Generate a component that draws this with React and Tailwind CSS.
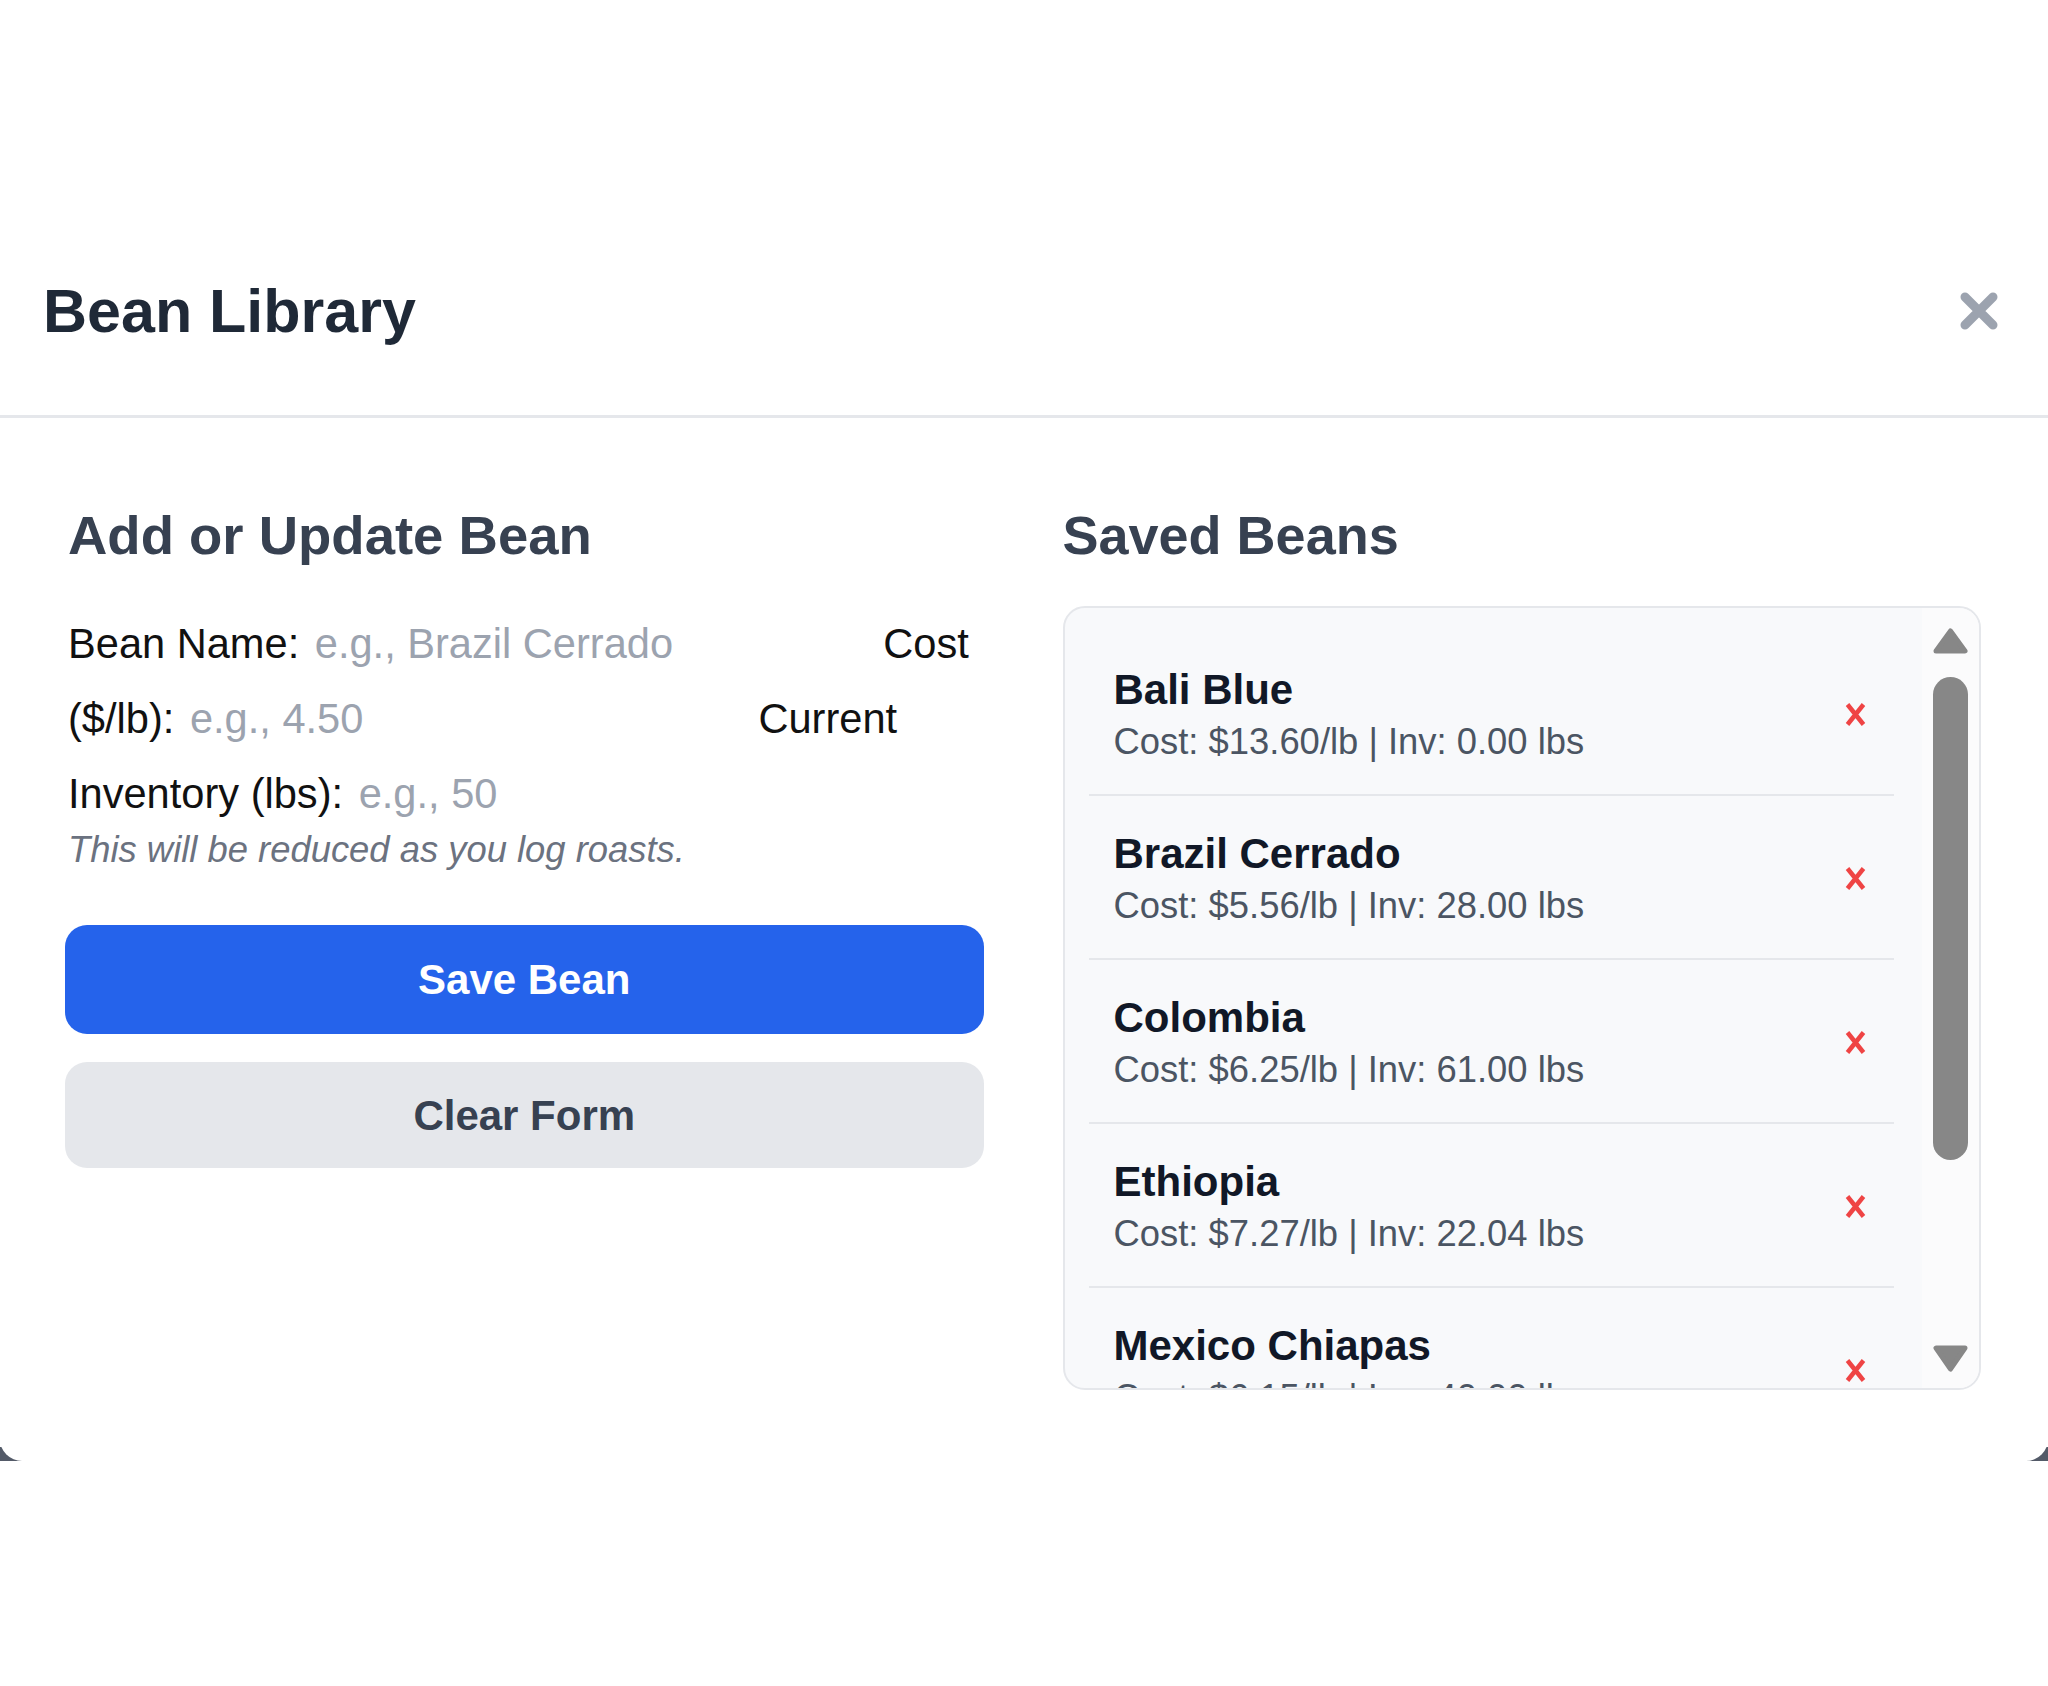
import React from "react";

const beans = [
  { name: "Bali Blue", cost: "13.60", inv: "0.00" },
  { name: "Brazil Cerrado", cost: "5.56", inv: "28.00" },
  { name: "Colombia", cost: "6.25", inv: "61.00" },
  { name: "Ethiopia", cost: "7.27", inv: "22.04" },
  { name: "Mexico Chiapas", cost: "6.15", inv: "40.00" },
];

function CloseIcon() {
  return (
    <svg width="42" height="42" viewBox="0 0 42 42">
      <path d="M7 7 L35 35 M35 7 L7 35" stroke="#9ca3af" strokeWidth="9" strokeLinecap="round" />
    </svg>
  );
}

function DeleteIcon() {
  return (
    <svg width="21" height="25" viewBox="0 0 21 25">
      <path d="M2.5 2.5 L18.5 22.5 M18.5 2.5 L2.5 22.5" stroke="#ef4444" strokeWidth="4.5" strokeLinecap="butt" />
    </svg>
  );
}

function UpArrow() {
  return (
    <svg width="35" height="26" viewBox="0 0 35 26">
      <polygon points="17.5,3 32,23 3,23" fill="#878787" stroke="#878787" strokeWidth="5" strokeLinejoin="round" />
    </svg>
  );
}

function DownArrow() {
  return (
    <svg width="35" height="27" viewBox="0 0 35 27">
      <polygon points="3,3 32,3 17.5,24" fill="#878787" stroke="#878787" strokeWidth="5" strokeLinejoin="round" />
    </svg>
  );
}

export default function App() {
  return (
    <div className="min-h-[1686px] w-full bg-[linear-gradient(to_bottom,#ffffff_1447px,#535a68_1447px,#535a68_1461px,#ffffff_1461px)] font-['Liberation_Sans',Arial,sans-serif]">
      <div className="h-[207px]" />
      <div className="bg-white rounded-b-[22px]">
        {/* Header */}
        <div className="flex items-center justify-between pl-[43px] pr-[48px] pt-[62px] pb-[62px] border-b-[3px] border-[#e5e7eb]">
          <h2 className="text-[61px] leading-[84px] font-bold text-[#1f2937]">Bean Library</h2>
          <button className="flex items-center justify-center">
            <CloseIcon />
          </button>
        </div>

        {/* Body */}
        <div className="grid grid-cols-2 gap-[79px] pl-[65px] pr-[67px] pt-[81px] pb-[71px]">
          {/* Left column */}
          <div className="flex flex-col">
            <h3 className="text-[54.5px] leading-[73px] font-bold text-[#374151] pl-[3px]">Add or Update Bean</h3>
            <div className="mt-[34px] text-[41.6px] leading-[75px] text-[#111111] pl-[3px]">
              <label>
                Bean Name:{" "}
                <input
                  className="inline-block w-[561px] pl-[4px] outline-none placeholder:text-[#9ca3af]"
                  placeholder="e.g., Brazil Cerrado"
                />
              </label>{" "}
              <label>
                Cost ($/lb):{" "}
                <input
                  className="inline-block w-[561px] pl-[4px] outline-none placeholder:text-[#9ca3af]"
                  placeholder="e.g., 4.50"
                />
              </label>{" "}
              <label>
                Current Inventory (lbs):{" "}
                <input
                  className="inline-block w-[561px] pl-[4px] outline-none placeholder:text-[#9ca3af]"
                  placeholder="e.g., 50"
                />
              </label>
            </div>
            <p className="text-[36.4px] leading-[38px] italic text-[#6b7280] pl-[3px]">
              This will be reduced as you log roasts.
            </p>
            <button className="mt-[56px] h-[109px] w-full rounded-[22px] bg-[#2563eb] text-white text-[42px] font-bold">
              Save Bean
            </button>
            <button className="mt-[28px] h-[106px] w-full rounded-[22px] bg-[#e5e7eb] text-[#374151] text-[42px] font-bold">
              Clear Form
            </button>
          </div>

          {/* Right column */}
          <div className="flex flex-col">
            <h3 className="text-[54px] leading-[73px] font-bold text-[#374151]">Saved Beans</h3>
            <div className="mt-[34px] h-[784px] flex rounded-[22px] border-2 border-[#e5e7eb] bg-[#f8f9fb] overflow-hidden">
              <div className="flex-1 overflow-hidden pl-[24px] pr-[28px] pt-[24px]">
                {beans.map((b) => (
                  <div
                    key={b.name}
                    className="flex items-center justify-between border-b-2 border-[#e5e7eb] pl-[25px] pr-[28px] pt-[30px] pb-[28px]"
                  >
                    <div className="flex flex-col">
                      <span className="text-[42px] leading-[56px] font-bold text-[#111827]">{b.name}</span>
                      <span className="text-[36.4px] leading-[48px] text-[#4b5563]">
                        Cost: ${b.cost}/lb | Inv: {b.inv} lbs
                      </span>
                    </div>
                    <button className="flex items-center justify-center">
                      <DeleteIcon />
                    </button>
                  </div>
                ))}
              </div>
              <div className="w-[57px] flex flex-col items-center bg-[#fbfbfc] pt-[20px] pb-[16px]">
                <UpArrow />
                <div className="mt-[23px] h-[483px] w-[35px] rounded-full bg-[#878787]" />
                <div className="flex-1" />
                <DownArrow />
              </div>
            </div>
          </div>
        </div>
      </div>
    </div>
  );
}
